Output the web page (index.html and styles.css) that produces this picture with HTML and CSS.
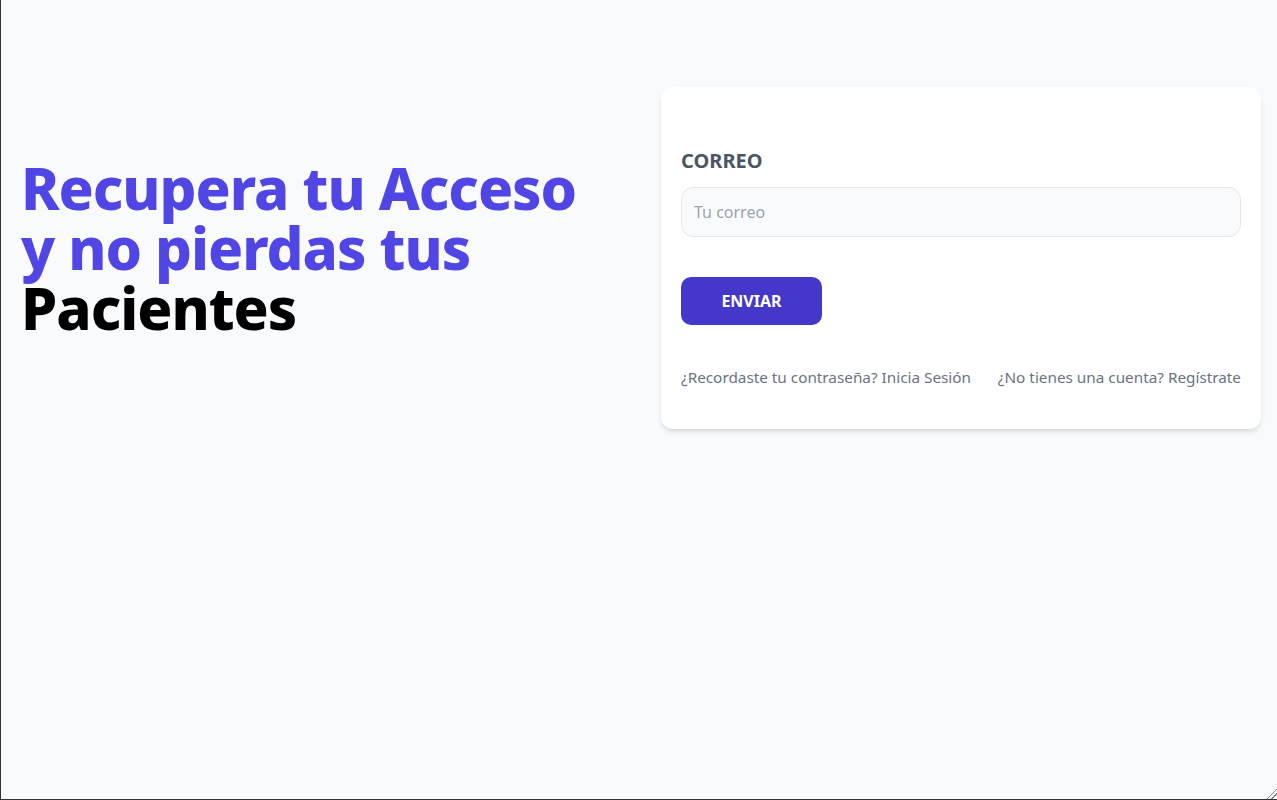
FILE: index.html
```html
<!DOCTYPE html>
<html lang="es">
<head>
<meta charset="utf-8">
<title>Recupera tu Acceso</title>
<link rel="stylesheet" href="styles.css">
</head>
<body>
<div class="frame">
  <main class="layout">
    <div class="hero">
      <h1 class="title">Recupera tu Acceso y no pierdas tus <span class="dark">Pacientes</span></h1>
    </div>
    <div class="card">
      <form class="form">
        <div class="field">
          <label class="label" for="email">Correo</label>
          <input class="input" id="email" type="email" placeholder="Tu correo">
        </div>
        <button class="btn" type="button">Enviar</button>
      </form>
      <nav class="links">
        <a class="link" href="#">¿Recordaste tu contraseña? Inicia Sesión</a>
        <a class="link" href="#">¿No tienes una cuenta? Regístrate</a>
      </nav>
    </div>
  </main>
  <div class="grip"></div>
</div>
</body>
</html>
```
FILE: styles.css
```css
* { box-sizing: border-box; }
html, body { margin: 0; height: 100%; }
body {
  background: #f9fafb;
  font-family: "Noto Sans", "Open Sans", sans-serif;
}
.frame {
  height: 800px;
  border-left: 1px solid #333;
  border-bottom: 1px solid #333;
  position: relative;
  background: #f9fafb;
}
.layout {
  display: grid;
  grid-template-columns: 1fr 1fr;
  column-gap: 40px;
  align-items: center;
  padding: 87px 16px 0 20px;
}
.title {
  margin: 0 0 20px;
  font-size: 58px;
  line-height: 60px;
  font-weight: 800;
  color: #4f46e5;
  letter-spacing: -1px;
}
.dark { color: #000; }
.card {
  background: #fff;
  border-radius: 12px;
  box-shadow: 0 4px 6px -1px rgba(0,0,0,.1), 0 2px 4px -2px rgba(0,0,0,.1);
  padding: 60px 20px 40px;
}
.form { display: flex; flex-direction: column; align-items: flex-start; }
.field { width: 100%; display: flex; flex-direction: column; }
.label {
  text-transform: uppercase;
  color: #4b5563;
  font-size: 20px;
  line-height: 28px;
  font-weight: 700;
}
.input {
  margin-top: 12px;
  width: 100%;
  height: 50px;
  padding: 12px;
  border: 1px solid #e5e7eb;
  border-radius: 12px;
  background: #f9fafb;
  font: inherit;
  font-size: 16px;
}
.input::placeholder { color: #9ca3af; }
.btn {
  margin-top: 40px;
  height: 48px;
  width: 141px;
  border: 0;
  border-radius: 10px;
  background: #4338ca;
  color: #fff;
  font: inherit;
  font-size: 16px;
  font-weight: 700;
  text-transform: uppercase;
}
.links {
  margin-top: 40px;
  display: flex;
  justify-content: space-between;
  line-height: 24px;
}
.link {
  color: #6b7280;
  text-decoration: none;
  font-size: 15.3px;
}
.grip {
  position: absolute;
  right: 0;
  bottom: 0;
  width: 12px;
  height: 12px;
  background: linear-gradient(135deg, transparent 55%, #888 55%, #888 62%, transparent 62%, transparent 75%, #888 75%, #888 82%, transparent 82%);
}
```
